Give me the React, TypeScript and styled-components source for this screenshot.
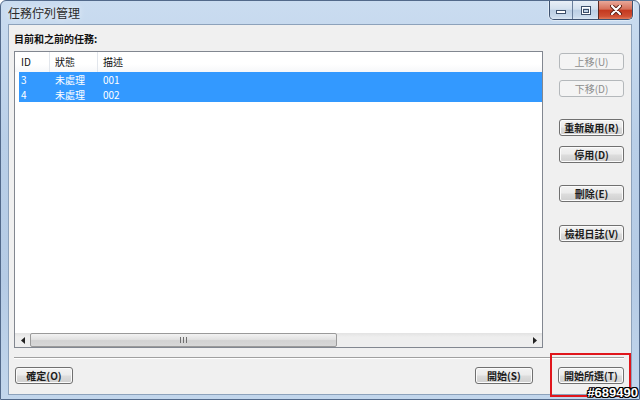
import React from 'react';
import styled, { createGlobalStyle } from 'styled-components';

const GlobalStyle = createGlobalStyle`
  html, body {
    margin: 0;
    padding: 0;
  }
  body {
    width: 640px;
    height: 400px;
    overflow: hidden;
    font-family: "Noto Sans CJK TC", "Liberation Sans", sans-serif;
  }
`;

const FONT = `"Noto Sans CJK TC", "Liberation Sans", sans-serif`;

const Window = styled.div`
  position: relative;
  width: 640px;
  height: 400px;
  box-sizing: border-box;
  display: flex;
  flex-direction: column;
  border: 1px solid #52698a;
  border-radius: 6px 6px 0 0;
  background: linear-gradient(180deg, #cadcf0 0%, #b9cfe8 35%, #b5cbe5 70%, #c2d6ec 100%);
  overflow: hidden;
`;

const TitleBar = styled.div`
  display: flex;
  align-items: flex-start;
  height: 23px;
  padding-left: 7px;
`;

const Title = styled.div`
  margin-top: 4px;
  line-height: 16px;
  font-size: 12px;
  color: #2a2a2a;
  text-shadow: 0 0 6px rgba(255, 255, 255, 0.9);
`;

const CaptionGroup = styled.div`
  display: flex;
  margin-left: auto;
  margin-right: 6px;
  border: 1px solid #3e5270;
  border-top: none;
  border-radius: 0 0 5px 5px;
  overflow: hidden;
  box-shadow: 0 0 0 1px rgba(255, 255, 255, 0.45);
`;

const CaptionButton = styled.div<{ $w: number; $close?: boolean }>`
  width: ${p => p.$w}px;
  height: 18px;
  display: flex;
  align-items: center;
  justify-content: center;
  border-left: ${p => (p.$close ? '1px solid #5b2a22' : '1px solid #6a7f9c')};
  &:first-child {
    border-left: none;
  }
  background: ${p =>
    p.$close
      ? 'linear-gradient(180deg, #e9a899 0%, #d6705a 45%, #c4391f 52%, #cf4f33 85%, #e07a5a 100%)'
      : 'linear-gradient(180deg, #e8eff7 0%, #d3e0ee 45%, #bccfe4 52%, #c8d9eb 85%, #dbe7f3 100%)'};
`;

const Client = styled.div`
  flex: 1;
  margin: 0 7px 4px 7px;
  box-sizing: border-box;
  display: flex;
  flex-direction: column;
  padding: 7px 7px 0 5px;
  background: #f0f0f0;
  border: 1px solid #8da2bb;
`;

const Body = styled.div`
  display: flex;
`;

const LeftCol = styled.div`
  width: 529px;
  display: flex;
  flex-direction: column;
`;

const SectionLabel = styled.div`
  height: 14px;
  line-height: 14px;
  margin-bottom: 5px;
  font-size: 10px;
  font-weight: bold;
  color: #111;
`;

const ListBox = styled.div`
  height: 297px;
  box-sizing: border-box;
  border: 1px solid #828790;
  background: #fff;
  display: flex;
  flex-direction: column;
`;

const HeaderRow = styled.div`
  display: flex;
  height: 20px;
  background: linear-gradient(180deg, #ffffff 0%, #ffffff 60%, #f6f7f9 100%);
`;

const HeaderCell = styled.div<{ $w?: number; $pad: number }>`
  ${p => (p.$w ? `width: ${p.$w}px;` : 'flex: 1;')}
  box-sizing: border-box;
  padding-left: ${p => p.$pad}px;
  border-right: ${p => (p.$w ? '1px solid #e2e6ec' : 'none')};
  line-height: 20px;
  font-size: 10px;
  color: #111;
`;

const Row = styled.div<{ $selected?: boolean }>`
  display: flex;
  height: 15px;
  margin-left: 4px;
  background: ${p => (p.$selected ? '#3399ff' : 'transparent')};
  color: ${p => (p.$selected ? '#fff' : '#111')};
`;

const Cell = styled.div<{ $w?: number; $pad: number }>`
  ${p => (p.$w ? `width: ${p.$w}px;` : 'flex: 1;')}
  box-sizing: border-box;
  padding-left: ${p => p.$pad}px;
  line-height: 15px;
  font-size: 10px;
`;

const ScrollBar = styled.div`
  margin-top: auto;
  height: 14px;
  display: flex;
  background: linear-gradient(180deg, #e3e3e3 0%, #eeeeee 30%, #eeeeee 100%);
`;

const ScrollArrow = styled.div`
  width: 15px;
  display: flex;
  align-items: center;
  justify-content: center;
`;

const ScrollTrack = styled.div`
  flex: 1;
  display: flex;
  align-items: stretch;
`;

const ScrollThumb = styled.div<{ $w: number }>`
  width: ${p => p.$w}px;
  box-sizing: border-box;
  border: 1px solid #9a9a9a;
  border-radius: 2px;
  background: linear-gradient(180deg, #f2f2f2 0%, #e2e2e2 45%, #d2d2d2 55%, #d8d8d8 100%);
  display: flex;
  align-items: center;
  justify-content: center;
`;

const RightCol = styled.div`
  margin-left: 16px;
  width: 65px;
  padding-top: 21px;
  display: flex;
  flex-direction: column;
`;

const Button = styled.button<{ $w: number; $gap?: number }>`
  width: ${p => p.$w}px;
  height: 17px;
  margin-top: ${p => p.$gap ?? 0}px;
  padding: 0;
  box-sizing: border-box;
  border: 1px solid #707070;
  border-radius: 3px;
  background: linear-gradient(180deg, #f3f3f3 0%, #ebebeb 48%, #dddddd 52%, #cfcfcf 100%);
  box-shadow: inset 0 0 0 1px #fbfbfb;
  font-family: ${FONT};
  font-size: 10px;
  font-weight: bold;
  line-height: 15px;
  color: #1c1c1c;
  &:disabled {
    border-color: #b4b8bb;
    background: #f4f4f4;
    box-shadow: none;
    color: #8d8d8d;
    font-weight: normal;
  }
`;

const Separator = styled.div`
  margin-top: 9px;
  border-top: 1px solid #a0a0a0;
  border-bottom: 1px solid #ffffff;
`;

const Footer = styled.div`
  display: flex;
  align-items: flex-start;
  margin-top: 8px;
  padding-left: 1px;
`;

const Spacer = styled.div`
  flex: 1;
`;

const Highlight = styled.div`
  position: relative;
  display: flex;
  margin-left: 25px;
  &::after {
    content: '';
    position: absolute;
    top: -14px;
    bottom: -13px;
    left: -8px;
    right: -7px;
    border: 2px solid #e0161c;
    pointer-events: none;
  }
`;

const Watermark = styled.div`
  position: absolute;
  right: 1px;
  bottom: 1px;
  font-family: "Liberation Sans", sans-serif;
  font-weight: bold;
  font-size: 13px;
  line-height: 10px;
  color: #fff;
  text-shadow: 1px 0 0 #000, -1px 0 0 #000, 0 1px 0 #000, 0 -1px 0 #000,
    1px 1px 0 #000, -1px -1px 0 #000, 1px -1px 0 #000, -1px 1px 0 #000;
`;

const MinIcon = () => (
  <svg width="10" height="8" viewBox="0 0 10 8">
    <rect x="0.5" y="4.5" width="9" height="3" fill="#fff" stroke="#3c4f6a" />
  </svg>
);

const MaxIcon = () => (
  <svg width="10" height="9" viewBox="0 0 10 9">
    <rect x="0.5" y="0.5" width="9" height="8" fill="none" stroke="#3c4f6a" />
    <rect x="1.5" y="1.5" width="7" height="6" fill="none" stroke="#fff" />
    <rect x="2.5" y="3.5" width="5" height="3" fill="none" stroke="#3c4f6a" />
  </svg>
);

const CloseIcon = () => (
  <svg width="12" height="10" viewBox="0 0 12 10">
    <path d="M2 1 L10 9 M10 1 L2 9" stroke="#5a1d12" strokeWidth="4" strokeLinecap="round" />
    <path d="M2 1 L10 9 M10 1 L2 9" stroke="#fff" strokeWidth="2.2" strokeLinecap="round" />
  </svg>
);

const ArrowIcon = ({ dir }: { dir: 'left' | 'right' }) => (
  <svg width="4" height="7" viewBox="0 0 4 7">
    <path d={dir === 'left' ? 'M4 0 L0 3.5 L4 7 Z' : 'M0 0 L4 3.5 L0 7 Z'} fill="#222" />
  </svg>
);

const Grip = () => (
  <svg width="7" height="6" viewBox="0 0 7 6">
    <path d="M0.5 0 V6 M3.5 0 V6 M6.5 0 V6" stroke="#6f6f6f" strokeWidth="1" />
  </svg>
);

const tasks = [
  { id: '3', status: '未處理', desc: '001' },
  { id: '4', status: '未處理', desc: '002' },
];

export default function App() {
  return (
    <>
      <GlobalStyle />
      <Window>
        <TitleBar>
          <Title>任務佇列管理</Title>
          <CaptionGroup>
            <CaptionButton $w={22}>
              <MinIcon />
            </CaptionButton>
            <CaptionButton $w={25}>
              <MaxIcon />
            </CaptionButton>
            <CaptionButton $w={33} $close>
              <CloseIcon />
            </CaptionButton>
          </CaptionGroup>
        </TitleBar>
        <Client>
          <Body>
            <LeftCol>
              <SectionLabel>目前和之前的任務:</SectionLabel>
              <ListBox>
                <HeaderRow>
                  <HeaderCell $w={35} $pad={6}>ID</HeaderCell>
                  <HeaderCell $w={48} $pad={5}>狀態</HeaderCell>
                  <HeaderCell $pad={5}>描述</HeaderCell>
                </HeaderRow>
                {tasks.map(t => (
                  <Row key={t.id} $selected>
                    <Cell $w={31} $pad={2}>{t.id}</Cell>
                    <Cell $w={48} $pad={5}>{t.status}</Cell>
                    <Cell $pad={5}>{t.desc}</Cell>
                  </Row>
                ))}
                <ScrollBar>
                  <ScrollArrow>
                    <ArrowIcon dir="left" />
                  </ScrollArrow>
                  <ScrollTrack>
                    <ScrollThumb $w={307}>
                      <Grip />
                    </ScrollThumb>
                  </ScrollTrack>
                  <ScrollArrow>
                    <ArrowIcon dir="right" />
                  </ScrollArrow>
                </ScrollBar>
              </ListBox>
            </LeftCol>
            <RightCol>
              <Button $w={65} disabled>上移(U)</Button>
              <Button $w={65} $gap={10} disabled>下移(D)</Button>
              <Button $w={65} $gap={22}>重新啟用(R)</Button>
              <Button $w={65} $gap={10}>停用(D)</Button>
              <Button $w={65} $gap={22}>刪除(E)</Button>
              <Button $w={65} $gap={23}>檢視日誌(V)</Button>
            </RightCol>
          </Body>
          <Separator />
          <Footer>
            <Button $w={58}>確定(O)</Button>
            <Spacer />
            <Button $w={58}>開始(S)</Button>
            <Highlight>
              <Button $w={66}>開始所選(T)</Button>
            </Highlight>
          </Footer>
        </Client>
        <Watermark>#689490</Watermark>
      </Window>
    </>
  );
}
